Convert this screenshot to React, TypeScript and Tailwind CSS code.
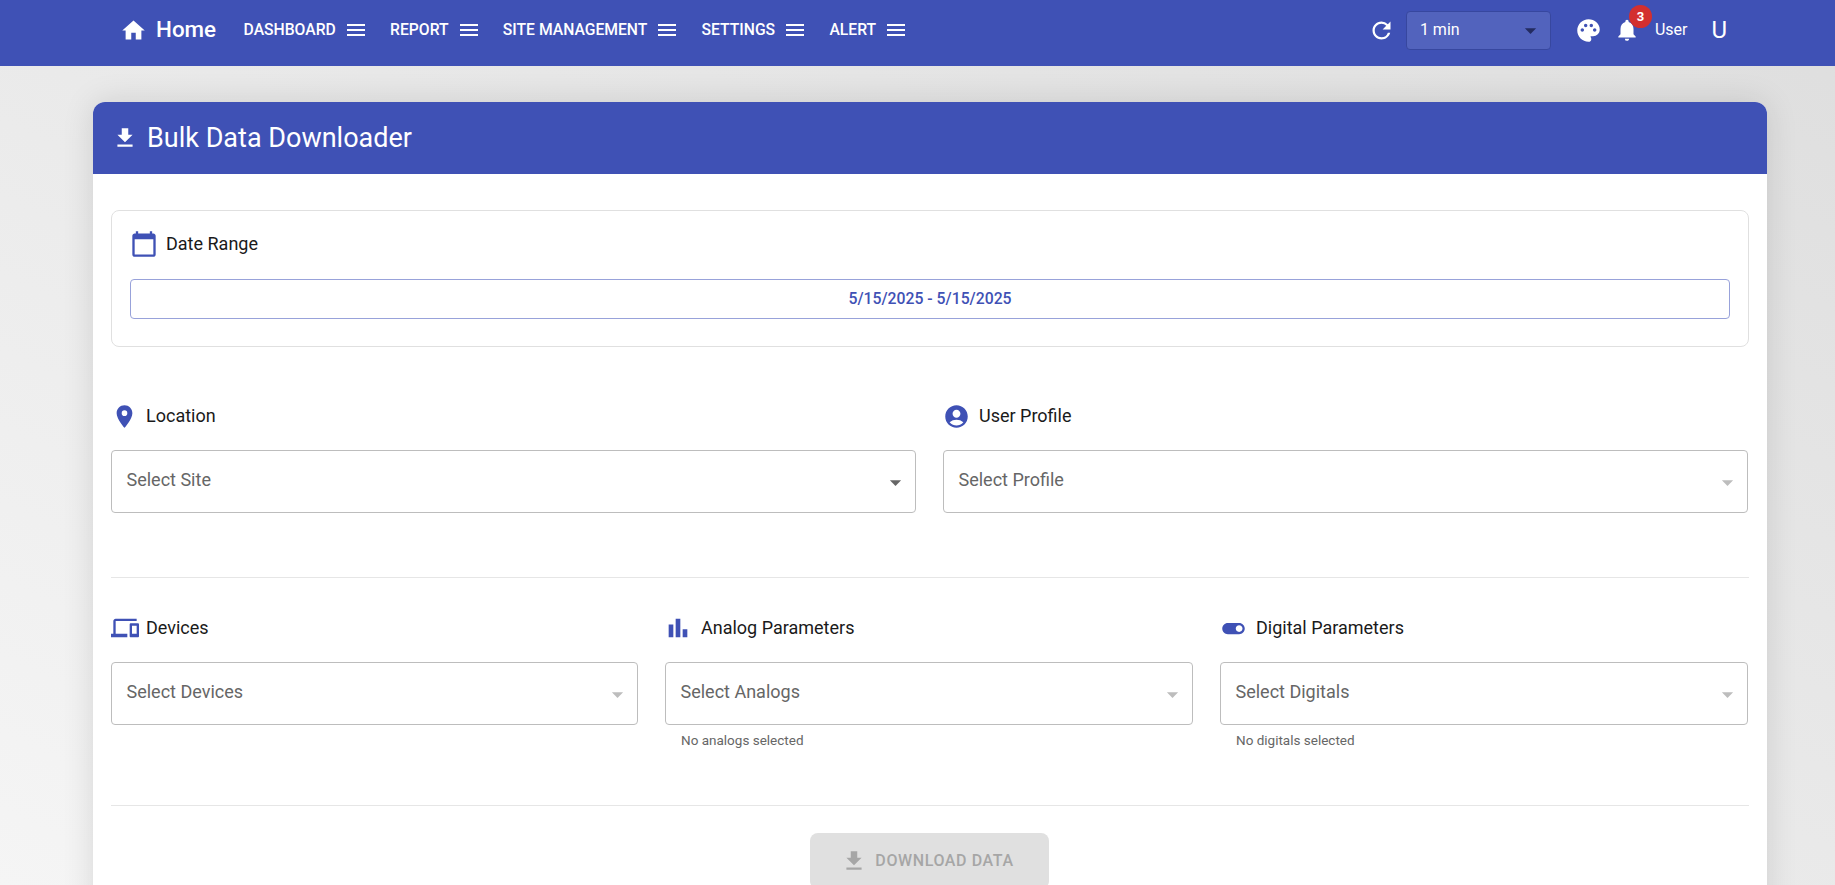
import React from "react";
import {
  MdHome, MdMenu, MdRefresh, MdPalette, MdNotifications, MdFileDownload, MdCalendarToday,
  MdLocationOn, MdAccountCircle, MdDevices, MdBarChart, MdToggleOn, MdArrowDropDown,
} from "react-icons/md";

const nav = ["DASHBOARD", "REPORT", "SITE MANAGEMENT", "SETTINGS", "ALERT"];

function Label({ icon, text, gap }: { icon: React.ReactNode; text: string; gap: string }) {
  return (
    <div className={`flex items-center h-6 ${gap} text-lg text-[#1a1a1a]`}>
      {icon}
      <span>{text}</span>
    </div>
  );
}

function Select({ placeholder, dark, hint }: { placeholder: string; dark?: boolean; hint?: string }) {
  return (
    <div>
      <div className="h-[63px] rounded border border-[#bdbdbd] flex items-start pl-[14.5px] pr-[6px] pt-[17px] bg-white">
        <span className="flex-1 text-lg leading-6 text-[#666666]">{placeholder}</span>
        <MdArrowDropDown className={`w-[27px] h-[27px] mt-[1px] ${dark ? "text-[#666666]" : "text-[#bdbdbd]"}`} />
      </div>
      {hint && <p className="text-[13.5px] leading-[18px] mt-[6px] pl-[16px] text-[#666666]">{hint}</p>}
    </div>
  );
}

export default function App() {
  return (
    <div className="h-screen overflow-hidden bg-gradient-to-tr from-[#f5f5f5] to-[#dedede] font-['Roboto',sans-serif]">
      <header className="h-[66px] bg-[#3f51b5] text-white flex items-center pl-[120px] pr-[108px] pb-[6px]">
        <MdHome className="w-[27px] h-[27px]" />
        <span className="ml-[9px] text-[22.4px] font-medium mr-[27.5px]">Home</span>
        {nav.map((n) => (
          <div key={n} className="flex items-center text-[15.7px] font-medium mr-[22.3px]">
            <span>{n}</span>
            <MdMenu className="w-6 h-6 ml-2" />
          </div>
        ))}
        <div className="flex-1" />
        <MdRefresh className="w-[27px] h-[27px] mr-[11px]" />
        <div className="w-[145px] h-[39px] rounded border border-[#37479f] bg-[#5263bd] flex items-center pl-[13px] pr-[6px] text-base">
          <span className="flex-1">1 min</span>
          <MdArrowDropDown className="w-[27px] h-[27px] text-[#232b60]" />
        </div>
        <MdPalette className="w-[27px] h-[27px] ml-[24px]" />
        <div className="relative ml-[12px]">
          <MdNotifications className="w-[26px] h-[26px]" />
          <span className="absolute -top-[12px] left-[15px] w-[23px] h-[23px] rounded-full bg-[#d32f2f] text-white text-[13px] font-bold flex items-center justify-center">3</span>
        </div>
        <span className="ml-[15px] text-base">User</span>
        <span className="ml-[24px] text-2xl">U</span>
      </header>

      <main className="pl-[93px] pr-[68px] pt-[36px]">
        <div className="bg-white rounded-xl overflow-hidden shadow-[0_0_32px_rgba(0,0,0,0.12)]">
          <div className="h-[72px] bg-[#3f51b5] text-white flex items-center pl-[19px] gap-[9px]">
            <MdFileDownload className="w-[26px] h-[26px]" />
            <h1 className="text-[27px] font-normal">Bulk Data Downloader</h1>
          </div>

          <div className="px-[18px] pt-[36px] pb-[40px]">
            <section className="h-[137px] rounded-lg border border-[#e0e0e0] px-[18px] pt-[19px]">
              <div className="flex items-center text-lg text-[#1a1a1a] h-7 gap-[8px]">
                <MdCalendarToday className="w-7 h-7 text-[#3f51b5]" />
                <span>Date Range</span>
              </div>
              <div className="mt-[21px] h-[40px] rounded border border-[#98a2da] flex items-center justify-center text-[15.75px] font-medium text-[#3f51b5]">
                5/15/2025 - 5/15/2025
              </div>
            </section>

            <div className="grid grid-cols-2 gap-x-[27px] mt-[57px] pr-[1px]">
              <div>
                <Label gap="gap-[8px]" text="Location" icon={<MdLocationOn className="w-[27px] h-[27px] text-[#3f51b5]" />} />
                <div className="mt-[22px]"><Select placeholder="Select Site" dark /></div>
              </div>
              <div>
                <Label gap="gap-[9px]" text="User Profile" icon={<MdAccountCircle className="w-[27px] h-[27px] text-[#3f51b5]" />} />
                <div className="mt-[22px]"><Select placeholder="Select Profile" /></div>
              </div>
            </div>

            <hr className="mt-[64px] border-[#e6e6e6]" />

            <div className="grid grid-cols-[527px_528px_528px] gap-x-[27px] mt-[38px]">
              <div>
                <Label gap="gap-[7px]" text="Devices" icon={<MdDevices className="w-[28px] h-[28px] text-[#3f51b5]" />} />
                <div className="mt-[22px]"><Select placeholder="Select Devices" /></div>
              </div>
              <div>
                <Label gap="gap-[9px]" text="Analog Parameters" icon={<MdBarChart className="w-[28px] h-[28px] text-[#3f51b5] -ml-[1px]" />} />
                <div className="mt-[22px]"><Select placeholder="Select Analogs" hint="No analogs selected" /></div>
              </div>
              <div>
                <Label gap="gap-[9px]" text="Digital Parameters" icon={<MdToggleOn className="w-[27px] h-[27px] text-[#3f51b5]" />} />
                <div className="mt-[22px]"><Select placeholder="Select Digitals" hint="No digitals selected" /></div>
              </div>
            </div>

            <hr className="mt-[56px] border-[#e6e6e6]" />

            <div className="flex justify-center mt-[27px] pr-[1px]">
              <div className="w-[239px] h-[56px] rounded-lg bg-[#e0e0e0] text-[#a6a6a6] flex items-center justify-center gap-[8px] pr-[4px] text-base font-medium tracking-[0.6px]">
                <MdFileDownload className="w-[26px] h-[26px]" />
                <span>DOWNLOAD DATA</span>
              </div>
            </div>
          </div>
        </div>
      </main>
    </div>
  );
}
